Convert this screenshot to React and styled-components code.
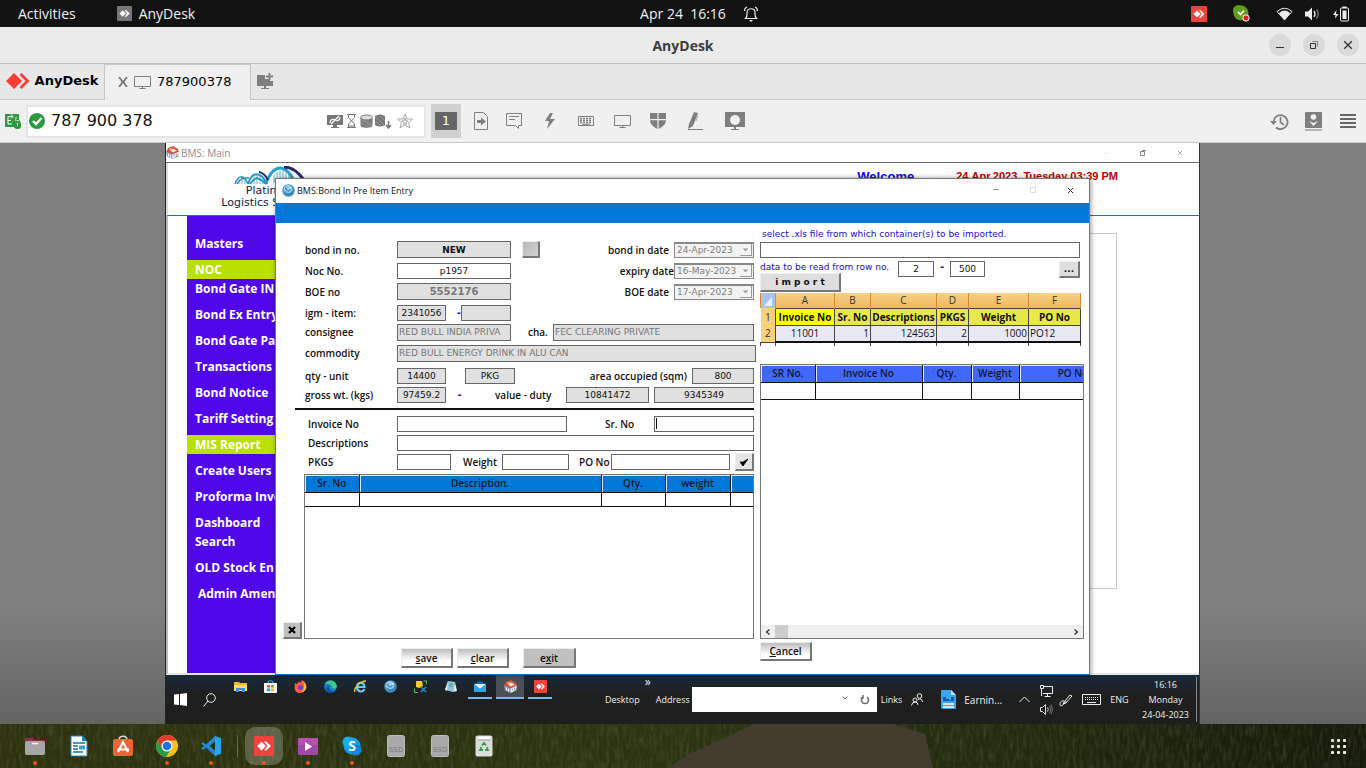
import React from 'react';
import styled, { createGlobalStyle, css } from 'styled-components';

const GlobalStyle = createGlobalStyle`
  *, *::before, *::after { box-sizing: border-box; }
  body { margin: 0; background: #808080; font-family: "Open Sans", "Noto Sans", sans-serif; }
  button, input, select { font: inherit; color: inherit; margin: 0; }
  svg { display: block; flex: none; }
`;

const ui = '"Open Sans", "Noto Sans", sans-serif';
const wide = '"DejaVu Sans", sans-serif';

const Page = styled.div`
  min-height: 100vh;
  display: flex;
  flex-direction: column;
`;

const PlainButton = styled.button`
  display: flex;
  align-items: center;
  justify-content: center;
  padding: 0;
  border: 0;
  background: none;
`;

/* ---------- desktop top bar ---------- */

const TopBar = styled.header`
  height: 27px;
  display: grid;
  grid-template-columns: 1fr auto 1fr;
  align-items: center;
  background: #131313;
  color: #f0f0f0;
  font-size: 14px;
`;

const TopLeft = styled.div`
  display: flex;
  align-items: center;
  gap: 41px;
  padding-left: 18px;
`;

const TopRight = styled.div`
  display: flex;
  align-items: center;
  justify-content: space-between;
  padding: 0 16px 0 17px;
`;

const Tray = styled.div`
  display: flex;
  align-items: center;
  gap: ${(p) => p.$gap}px;
`;

const TopItem = styled(PlainButton)`
  gap: 7px;
`;

/* ---------- application frame ---------- */

const TitleBar = styled.div`
  height: 37px;
  display: grid;
  grid-template-columns: 1fr auto 1fr;
  align-items: center;
  background: #ebebeb;
  border-bottom: 1px solid #bdbdbd;
  color: #3d3d3d;
`;

const WindowTitle = styled.h1`
  margin: 0;
  grid-column: 2;
  font-size: 14px;
  font-weight: 700;
`;

const FrameButtons = styled.div`
  display: flex;
  justify-content: flex-end;
  gap: 12px;
  padding-right: 7px;
`;

const RoundButton = styled(PlainButton)`
  width: 22px;
  height: 22px;
  border-radius: 50%;
  background: #dadada;
`;

const TabBar = styled.nav`
  height: 36px;
  display: flex;
  background: #e7e7e7;
  font-family: ${wide};
  font-size: 13px;
  line-height: 14px;
  color: #000;
`;

const BrandTab = styled(PlainButton)`
  width: 104px;
  gap: 5px;
  padding-bottom: 2px;
  font-weight: 700;
  border-bottom: 1px solid #c6c6c6;
`;

const ActiveTab = styled.div`
  width: 147px;
  display: flex;
  align-items: center;
  padding: 0 0 2px 13px;
  gap: 6px;
  background: #f0f0f0;
  border: solid #c6c6c6;
  border-width: 1px 1px 0 1px;
`;

const TabRest = styled.div`
  flex: 1;
  display: flex;
  align-items: center;
  padding: 0 0 2px 6px;
  border-bottom: 1px solid #c6c6c6;
`;

const ToolBar = styled.div`
  height: 43px;
  display: flex;
  align-items: center;
  background: #f0f0f0;
  border-bottom: 1px solid #c9c9c9;
  color: #7f7f7f;
  padding-left: 5px;
`;

const AddressBox = styled.div`
  width: 400px;
  height: 33px;
  margin-left: 5px;
  display: flex;
  align-items: center;
  gap: 2px;
  padding: 0 10px 0 1px;
  background: #fff;
  border: 2px solid #e5e5e5;
`;

const AddressInput = styled.input`
  flex: 1;
  min-width: 0;
  border: 0;
  padding: 0 0 2px 4px;
  background: none;
  outline: 0;
  color: #111;
  font-family: ${wide};
  font-size: 16px;
`;

const MonitorNumber = styled(PlainButton)`
  width: 30px;
  height: 34px;
  margin: 0 5px;
  background: #d0d0d0;

  span {
    width: 22px;
    height: 18px;
    line-height: 18px;
    background: #666;
    color: #fff;
    font-family: ${wide};
    font-size: 13px;
  }
`;

const ToolButton = styled(PlainButton)`
  width: ${(p) => p.$w || 36}px;
  height: 34px;
`;

const ToolEnd = styled.div`
  display: flex;
  margin-left: auto;
`;

/* ---------- remote screen ---------- */

const Stage = styled.main`
  flex: 1;
  display: flex;
  justify-content: center;
  background: linear-gradient(#808080 80%, #636363);
`;

const Remote = styled.div`
  width: 100%;
  max-width: 1034px;
  display: flex;
  flex-direction: column;
  background: #fff;
  border-right: 1px solid #333;
  box-shadow: -1px 0 0 #222;
`;

const Desktop = styled.div`
  position: relative;
  flex: 1;
  display: flex;
  flex-direction: column;
`;

const MainCaption = styled.div`
  height: 20px;
  display: flex;
  align-items: center;
  gap: 2px;
  padding: 0 16px 0 0;
  border-bottom: 1px solid #6b6b6b;
  color: #8c8c8c;
  font-size: 10px;
`;

const CaptionButtons = styled.div`
  display: flex;
  gap: ${(p) => p.$gap}px;
  margin-left: auto;
`;

const MainHeader = styled.div`
  height: 53px;
  display: flex;
  justify-content: space-between;
  padding: 3px 81px 0 36px;
  border-left: 2px solid #ddd;
  border-bottom: 1px solid #0078d7;
  font-family: "Liberation Sans", sans-serif;
`;

const Company = styled.div`
  width: 132px;
  display: flex;
  flex-direction: column;
  align-items: center;
  font-family: ${wide};
  font-size: 11px;
  line-height: 12px;
  color: #14213d;
  text-align: center;
  white-space: nowrap;
`;

const Greeting = styled.div`
  display: flex;
  gap: 42px;
  height: 20px;
  align-items: center;
  white-space: pre;
  font-weight: 700;
  font-size: 11px;
  color: #c00000;

  strong {
    font-size: 13px;
    color: #0a0aee;
  }
`;

const MainBody = styled.div`
  flex: 1;
  display: flex;
  padding-left: 19px;
  border-left: 2px solid #bbb;
  border-bottom: 2px solid #e4e4e4;
`;

const SideMenu = styled.nav`
  width: 130px;
  padding-top: 18px;
  background: #5008ea;
`;

const MenuLink = styled.a`
  display: block;
  padding-left: ${(p) => (p.$indent ? 11 : 8)}px;
  margin-bottom: ${(p) => (p.$tight ? 0 : 7)}px;
  background: ${(p) => (p.$lit ? '#b9e000' : 'none')};
  color: #fff;
  font-size: 12px;
  font-weight: 700;
  line-height: 19px;
  text-decoration: none;
  white-space: pre;
`;

const EmptyPanel = styled.section`
  flex: 1;
  height: 356px;
  margin: 17px 82px 0 40px;
  border: 1px solid #c8c8c8;
`;

/* ---------- dialog ---------- */

const Dialog = styled.section`
  position: absolute;
  left: 109px;
  right: 109px;
  top: 35px;
  bottom: 0;
  display: flex;
  flex-direction: column;
  background: #fff;
  border: 1px solid #777;
  border-bottom-color: #0078d7;
  box-shadow: 1px 0 5px rgba(0, 0, 0, 0.4);
`;

const DialogCaption = styled.div`
  height: 24px;
  display: flex;
  align-items: center;
  gap: 2px;
  padding: 0 15px 2px 6px;
  font-size: 9px;
  color: #111;
`;

const Band = styled.div`
  height: 20px;
  background: #0078d7;
`;

const DialogBody = styled.div`
  flex: 1;
  display: grid;
  grid-template-columns: 484px minmax(0, 1fr);
  font-size: 10px;
  color: #111;
`;

const FormColumn = styled.form`
  display: flex;
  flex-direction: column;
  padding-right: 6px;
`;

const Fields = styled.div`
  padding: ${(p) => (p.$lower ? '4px 0 2px 32px' : '16px 0 5px 29px')};
`;

const Row = styled.div`
  display: flex;
  align-items: center;
  height: ${(p) => p.$h || 21}px;
  white-space: nowrap;
`;

const Label = styled.label`
  width: ${(p) => (p.$w ? p.$w + 'px' : 'auto')};
  flex: ${(p) => (p.$grow ? 1 : 'none')};
  text-align: ${(p) => (p.$grow ? 'right' : 'left')};
  padding-left: ${(p) => p.$gap || 0}px;
  padding-right: ${(p) => p.$end || 0}px;
  font-weight: 600;
  line-height: 14px;
`;

const Dash = styled.span`
  flex: none;
  width: ${(p) => p.$w}px;
  text-align: ${(p) => (p.$align ? p.$align : 'center')};
  color: #1010e0;
  font-family: ${wide};
  font-weight: 700;
`;

const Field = styled.input`
  flex: ${(p) => (p.$w ? 'none' : 1)};
  width: ${(p) => (p.$w ? p.$w + 'px' : 'auto')};
  min-width: 0;
  height: ${(p) => (p.$tall ? 17 : 16)}px;
  margin-left: ${(p) => p.$gap || 0}px;
  padding: 0 1px;
  border: 1px solid #666;
  border-radius: 0;
  outline: 0;
  background: ${(p) => (p.$shaded ? '#e0e0e0' : '#fff')};
  color: ${(p) => (p.$dim ? '#777' : '#111')};
  font-family: ${wide};
  font-size: ${(p) => (p.$large ? 10 : 9)}px;
  font-weight: ${(p) => (p.$bold ? 700 : 400)};
  text-align: ${(p) => (p.$left ? 'left' : 'center')};
  ${(p) => p.$caret && css`
    background: linear-gradient(#111, #111) 1px 1px / 1px 11px no-repeat #fff;
  `}
`;

const DateBox = styled.span`
  position: relative;
  width: 80px;
  height: 16px;
  border: 1px solid #888;
  border-top-width: 2px;
  background: #f2f2f2;

  svg {
    position: absolute;
    right: 1px;
    top: 0;
    background: #f4f4f4;
    border: solid #999;
    border-width: 0 1px 1px 0;
    pointer-events: none;
  }
`;

const DateSelect = styled.select`
  appearance: none;
  display: block;
  width: 100%;
  height: 13px;
  padding: 0 0 0 2px;
  border: 0;
  background: none;
  opacity: 1;
  color: #808080;
  font-family: ${wide};
  font-size: 9px;
  line-height: 12px;
`;

const bevel = css`
  border: solid;
  border-width: 1px 2px 2px 1px;
  border-color: #eee #777 #777 #eee;
`;

const PushButton = styled.button`
  ${bevel}
  width: ${(p) => p.$w}px;
  height: ${(p) => p.$h || 20}px;
  flex: none;
  padding: 0;
  display: flex;
  align-items: center;
  justify-content: center;
  color: #111;
  background: ${(p) => (p.$flat ? p.$flat : 'linear-gradient(#bdbdbd, #fff 70%)')};
  font-weight: ${(p) => (p.$bold ? 700 : 600)};
  font-family: ${(p) => (p.$bold ? wide : ui)};
  font-size: ${(p) => (p.$bold ? 9 : 10)}px;
  line-height: 12px;
  white-space: pre;
`;

const Rule = styled.hr`
  width: 459px;
  height: 2px;
  margin: 0 0 0 19px;
  border: 0;
  background: #111;
`;

const ListRow = styled.div`
  flex: 1;
  display: flex;
  align-items: flex-end;
  gap: 2px;
  padding-left: ${(p) => (p.$flush ? 0 : 7)}px;
`;

const ListBox = styled.div`
  flex: 1;
  align-self: stretch;
  min-width: 0;
  display: flex;
  flex-direction: column;
  justify-content: space-between;
  overflow: hidden;
  border: 1px solid #777;
`;

const ListTable = styled.table`
  width: ${(p) => p.$w}px;
  table-layout: fixed;
  border-collapse: collapse;

  th {
    height: 17px;
    padding: 0;
    background: ${(p) => p.$head};
    border: solid #111;
    border-width: 0 1px 1px 1px;
    box-shadow: inset 1px 1px 0 #dbe8ff;
    font-weight: 600;
    line-height: 12px;
    color: #101828;
  }
  td {
    height: ${(p) => p.$row}px;
    padding: 0;
    border: 1px solid #111;
  }
  th:first-child, td:first-child { border-left: 0; }
`;

const Actions = styled.div`
  display: flex;
  padding: 9px 0 6px 125px;
  gap: ${(p) => p.$gap}px;
`;

const ImportColumn = styled.div`
  display: flex;
  flex-direction: column;
  padding: 4px 5px 13px 0;
`;

const Hint = styled.label`
  display: block;
  padding-left: ${(p) => p.$indent || 0}px;
  margin-bottom: ${(p) => (p.$indent ? 1 : 0)}px;
  color: #1a0dc4;
  font-family: ${wide};
  font-size: 9px;
  line-height: ${(p) => p.$line}px;
  white-space: nowrap;
`;

const ImportRow = styled.div`
  display: flex;
  align-items: flex-start;
  width: 320px;
  height: 31px;
  margin: 3px 0 1px;
`;

const ImportStack = styled.div`
  width: 138px;
`;

const Spacer = styled.span`
  flex: 1;
`;

const Sheet = styled.table`
  width: 320px;
  height: 53px;
  margin-bottom: 18px;
  table-layout: fixed;
  border-collapse: collapse;
  font-size: 10px;
  line-height: 12px;

  th, td { padding: 0; overflow: hidden; white-space: nowrap; }
  thead th {
    height: 15px;
    background: linear-gradient(#f6cf8a, #f0b95c);
    border: solid #d68a34;
    border-width: 0 1px;
    font-weight: 400;
    color: #333;
  }
  thead th:first-child { background: #a9c4e9; }
  tbody th {
    background: #fbd07c;
    font-weight: 400;
    color: #333;
    text-align: center;
  }
  tbody td { border: 1px solid #444; }
`;

const SheetHead = styled.td`
  height: 17px;
  background: ${(p) => (p.$first ? '#ffff00' : '#e8e84a')};
  font-weight: 700;
  text-align: center;
`;

const SheetCell = styled.td`
  && {
    height: 17px;
    padding: 0 1px;
    background: #e8e8f4;
    border-bottom: 2px solid #111;
  }
  text-align: ${(p) => p.$align};
`;

const SheetStub = styled.td`
  && {
    height: 4px;
    border-bottom: 0;
  }
`;

const ScrollBar = styled.div`
  height: 13px;
  display: flex;
  align-items: center;
  background: #efefef;
  color: #444;
`;

const ScrollThumb = styled.span`
  width: 13px;
  height: 13px;
  margin-right: auto;
  background: #cdcdcd;
`;

const ScrollButton = styled(PlainButton)`
  width: 14px;
  height: 13px;
`;

const CancelBar = styled.div`
  padding-top: 3px;
`;

/* ---------- remote taskbar ---------- */

const TaskBar = styled.footer`
  height: 49px;
  display: flex;
  background: linear-gradient(#1a2a3a, #1f1f1f 45%);
  color: #eee;
  font-size: 9px;
`;

const TaskStart = styled.div`
  width: 59px;
  display: flex;
  align-items: center;
  gap: 16px;
  padding-left: 8px;
`;

const TaskApp = styled(PlainButton)`
  width: ${(p) => (p.$on ? 28 : 24)}px;
  height: 24px;
  margin: 0 ${(p) => (p.$on ? 1 : 3)}px;
  background: ${(p) => (p.$on ? '#4b5058' : 'none')};
  border-bottom: 2px solid ${(p) => (p.$open ? '#76b9ed' : 'transparent')};
`;

const TaskTools = styled.div`
  flex: 1;
  display: flex;
  align-items: center;
  padding-left: 50px;
`;

const Chevrons = styled.span`
  align-self: flex-start;
  width: 16px;
  text-align: center;
  font-size: 12px;
  line-height: 14px;
`;

const TaskField = styled.div`
  width: 185px;
  height: 25px;
  display: flex;
  align-items: center;
  gap: 12px;
  margin: 0 4px 0 2px;
  padding-right: 7px;
  background: #fff;
  color: #777;

  input {
    flex: 1;
    min-width: 0;
    border: 0;
    outline: 0;
    background: none;
  }
`;

const PeopleButton = styled(PlainButton)`
  margin-left: 9px;
`;

const News = styled(PlainButton)`
  gap: 8px;
  margin: 0 17px 0 18px;
  font-size: 10px;
`;

const TrayPair = styled.div`
  width: 24px;
  height: 44px;
  margin: 0 1px 0 4px;
  display: flex;
  flex-direction: column;
  align-items: center;
  justify-content: space-evenly;
`;

const Clock = styled.time`
  width: 62px;
  margin-left: auto;
  border-right: 1px solid #888;
  margin-right: 2px;
  font-size: 9px;
  line-height: 15px;
  text-align: center;
  white-space: nowrap;
`;

/* ---------- dock ---------- */

const Dock = styled.footer`
  position: relative;
  height: 44px;
  display: flex;
  align-items: center;
  padding: 0 17px 0 13px;
  overflow: hidden;
  background: #242b11;
`;

const Wallpaper = styled.svg`
  position: absolute;
  inset: 0;
  width: 100%;
  height: 100%;
`;

const DockApp = styled(PlainButton)`
  position: relative;
  width: 44px;
  height: 44px;

  &::before {
    content: "";
    position: absolute;
    inset: 3px;
    border-radius: 10px;
    background: ${(p) => (p.$active ? 'rgba(255,255,255,0.22)' : 'none')};
  }
  &::after {
    content: "";
    position: absolute;
    bottom: 3px;
    left: 20px;
    width: 4px;
    height: 4px;
    border-radius: 2px;
    background: ${(p) => (p.$running ? '#e95420' : 'none')};
  }
  svg { position: relative; }
`;

const DockDivider = styled.span`
  position: relative;
  width: 1px;
  height: 22px;
  margin: 0 4px;
  background: #66694f;
`;

const GridButton = styled(PlainButton)`
  position: relative;
  width: 22px;
  height: 22px;
  margin-left: auto;
`;

/* ---------- drawings ---------- */

const Svg = ({ w = 16, h = w, box, children, ...rest }) => (
  <svg width={w} height={h} viewBox={box || `0 0 ${w} ${h}`} fill="none" aria-hidden="true" {...rest}>
    {children}
  </svg>
);

const AnyDeskTile = ({ size = 16, bg = '#ef443b' }) => (
  <Svg w={size} box="0 0 16 16">
    <rect width="16" height="16" rx="1" fill={bg} />
    <path d="M2.5 8 6 4.5 9.5 8 6 11.500z" fill="#fff" />
    <path d="M8.500 4.600 9.700 4.600 13.200 8 9.700 11.400 8.500 11.400 11 8z" fill="#fff" stroke="#fff" strokeWidth=".5" />
  </Svg>
);

const Monitor = ({ w = 17 }) => (
  <Svg w={w} h={16} box="0 0 17 16" stroke="#7f7f7f">
    <path d="M.5 2.500h16v10H.5zM8.500 12.500v2M5.500 14.500h6" />
  </Svg>
);

const Database = () => (
  <Svg w={13} h={14} fill="#777">
    <path d="M.5 3.500v8c0 3 12 3 12 0v-8z" />
    <ellipse cx="6.500" cy="3.500" rx="6" ry="2.500" fill="#ddd" stroke="#777" />
    <path d="M1 6l11 6M1 9l8 4M4 6l8 4" stroke="#aaa" strokeWidth=".6" />
  </Svg>
);

const BmsIcon = ({ size = 13 }) => (
  <Svg w={size} box="0 0 13 13">
    <path d="M0 6 2 2l5-2 5 3 1 3-6 3z" fill="#d9503a" />
    <path d="M0 5.500l6.500 3V13L1 10.500z" fill="#7e9be0" />
    <path d="M13 5.500 6.500 8.500V13l5.500-2.500z" fill="#e8ecfa" />
    <path d="M7 13l5.500-2.500V8.500z" fill="#58b947" />
    <path d="M2.500 7.500v3M4.500 8.500v3M8.500 8.500v3M10.500 7.500v2" stroke="#fff" />
    <path d="M10.500 7.500v2M8.500 8.500v2" stroke="#7f6fb5" strokeWidth=".7" />
    <circle cx="4.500" cy="3" r="1.300" fill="#f5a25a" />
    <path d="M7 2.500l4 2-4 2-3-2z" fill="#f6e8e4" />
  </Svg>
);

const GlobeIcon = ({ size = 13 }) => (
  <Svg w={size} box="0 0 13 13">
    <circle cx="6.500" cy="6.500" r="6.200" fill="#3b8ec6" />
    <circle cx="6" cy="5.500" r="4.500" fill="#8fd0f2" />
    <path d="M4 3.500c-1 2 1 3.500 2.500 3.500S9 5 8 3.500M3 7.500c1.500 3 5.500 3 7 0" stroke="#1b6299" />
    <circle cx="8.500" cy="4" r="1" fill="#fff" />
  </Svg>
);

const Logo = () => (
  <Svg w={72} h={19}>
    <g stroke="#6fc3dc" strokeWidth="1.200">
      <path d="M5 13v5M8 11v7M11 13v5M20 11v7M23 9v9M26 9v9M29 11v7M40 9v8M43 6v11M46 4v9M49 3v9M52 3v9M55 5v9M58 8v9" />
    </g>
    <path d="M1 18c3-9 9-10 13 0M3 18c4-7 8-6 12-6" stroke="#2a8fb5" strokeWidth="1.500" />
    <path d="M14 18c4-13 13-13 19 0M16 18c6-9 9-6 16 0" stroke="#2596c4" strokeWidth="2" />
    <path d="M32 17C40-3 52-3 61 17" stroke="#2aa0cc" strokeWidth="3" />
    <path d="M50 1c9 0 15 6 20 13" stroke="#2b2a6c" strokeWidth="3" />
    <path d="M25 6c5 1 7 4 9 8" stroke="#2b2a6c" strokeWidth="2" />
  </Svg>
);

const CloseMark = ({ color = '#222', size = 7 }) => (
  <Svg w={size} box="0 0 8 8" stroke={color} strokeWidth="1.100"><path d="M1 1l6 6M7 1 1 7" /></Svg>
);

const DateField = ({ id, value }) => (
  <DateBox>
    <DateSelect id={id} disabled defaultValue={value}><option>{value}</option></DateSelect>
    <Svg w={12} h={12}><path d="M3 5h6L6 8z" fill="#999" /></Svg>
  </DateBox>
);

const Ssd = () => (
  <Svg w={18} h={22}>
    <rect x=".5" y=".5" width="17" height="21" rx="2" fill="#a9a9a9" stroke="#bdbdbd" />
    <text x="9" y="17" fontSize="7" fill="#7c7c7c" textAnchor="middle" fontFamily="DejaVu Sans, sans-serif">SSD</text>
  </Svg>
);

const taskApps = [
  ['File Explorer', <Svg w={13}><path d="M0 2h5l1 1h7v8H0z" fill="#f2b632" /><path d="M0 5h13v6H0z" fill="#fbd969" /><path d="M2 8h9v4H8v-2H5v2H2z" fill="#3a8fd8" /></Svg>],
  ['Store', <Svg w={13}><path d="M4 3c0-3 5-3 5 0" stroke="#29a5e0" strokeWidth="1.200" /><path d="M0 3h13v9q0 1-1 1H1q-1 0-1-1z" fill="#f4f4f4" /><path d="M3 5h3v2.500H3z" fill="#f25022" /><path d="M7 5h3v2.500H7z" fill="#7fba00" /><path d="M3 8.500h3V11H3z" fill="#00a4ef" /><path d="M7 8.500h3V11H7z" fill="#ffb900" /></Svg>],
  ['Firefox', <Svg w={13}><path d="M1 3l2 1 2-3 1 2 2-3c4 3 5 5 4 8-1 3-3 5-6 5S.5 11 .5 7z" fill="#ff5a36" /><path d="M9 1c3 3 4 6 3 8s-3 3-6 3c4-1 5-5 3-11z" fill="#ffb52e" /><circle cx="6.500" cy="7.500" r="2.600" fill="#7a3fd0" /></Svg>],
  ['Edge', <Svg w={13}><circle cx="6.500" cy="6.500" r="6.300" fill="#1481c8" /><path d="M1 4C3-1 11-1 12.800 6c0 3-3 3-5 2 1-3-3-5-6.800-4z" fill="#3ccb8a" /><path d="M5 6c-1 3 2 6 6 5-3 3-8 2-9-2 0-2 1-3 3-3z" fill="#0d4fa3" /></Svg>],
  ['Internet Explorer', <Svg w={13}><path d="M10.500 9c-2 4-7.500 3-7.500-2s7-6 7.500 0H4" stroke="#5fcbf7" strokeWidth="2.200" /><path d="M1 12C-1 9 6 1 12 1" stroke="#f7c834" strokeWidth="1.300" /></Svg>],
  ['Bond', <GlobeIcon />],
  ['Tools', <Svg w={13}><path d="M2 1h6l1 5-4 2-3-1z" fill="#f7c93a" /><path d="M7 7l5 5M12 7l-5 5" stroke="#2b8ad6" strokeWidth="1.500" /><path d="M9.500 1h3v3M.5 8.500v4h3.500" stroke="#5bb850" strokeWidth="1.200" /></Svg>],
  ['Notepad', <Svg w={13}><path d="M4 1l7 1-2 10-8-2z" fill="#8fc7d8" /><path d="M11 2l2 9-4 1z" fill="#e4edf0" /><path d="M4 1L1 10l2 .5z" fill="#e4edf0" /><path d="M5 4l4 .5M5 6l3.500.5" stroke="#4b94aa" /></Svg>],
  ['Mail', <Svg w={14} h={13}><path d="M1 4l6-3 6 3v8H1z" fill="#0f6cbd" /><path d="M1 4h12L7 9z" fill="#d8ecfb" /><path d="M1 4.500 7 9l6-4.500V12H1z" fill="#2aa4ee" /></Svg>, true],
  ['BMS', <BmsIcon />, true, true],
  ['AnyDesk', <AnyDeskTile size={13} />, true],
];

const dockApps = [
  ['Files', true, <Svg w={22}><path d="M1 3h8l2 2h10v5H1z" fill="#8c2f4e" /><rect x="1" y="6" width="20" height="14" rx="2" fill="#a6a6a6" /><path d="M8 8.500h6" stroke="#fff" strokeWidth="1.500" /></Svg>],
  ['Writer', false, <Svg w={18} h={22}><path d="M1 1h11l5 5v15H1z" fill="#fff" stroke="#1c86c8" /><path d="M12 1l5 5h-5z" fill="#1c86c8" /><path d="M3 8h12M3 11h5M3 14h5M3 17h10" stroke="#1671ab" strokeWidth="1.500" /><path d="M9 10.500h6v4H9z" fill="#3a9edb" /></Svg>],
  ['Software', false, <Svg w={22}><path d="M7 5c0-5 8-5 8 0" stroke="#ddd" strokeWidth="1.500" /><rect x="1" y="4" width="20" height="17" rx="2" fill="#ee6434" /><path d="M6 17l5-10 5 10M5 14.500h12" stroke="#fff" strokeWidth="2" /></Svg>],
  ['Chrome', true, <Svg w={22}><circle cx="11" cy="11" r="11" fill="#fbc116" /><path d="M1.500 5.500A11 11 0 0 1 20.500 5.500H11L6 14z" fill="#e33b2e" /><path d="M1.500 5.500A11 11 0 0 0 10 22l5.500-8.500H6.500z" fill="#269b4a" /><circle cx="11" cy="11" r="5.500" fill="#fff" /><circle cx="11" cy="11" r="4.300" fill="#1a73e8" /></Svg>],
  ['Code', true, <Svg w={20}><path d="M14 0l6 2.500v15L14 20 5 11.500 2 14l-2-1.500L3 10 0 7.500 2 6l3 2.500z" fill="#1f8ad2" /><path d="M14 5.500v9L8.500 10z" fill="#272e14" /><path d="M14 0l6 2.500v15L14 20z" fill="#2ba3ee" /></Svg>],
  null,
  ['AnyDesk', true, <AnyDeskTile size={20} />],
  ['Videos', true, <Svg w={22}><rect x="1" y="3" width="20" height="17" rx="1" fill="#b54fb0" /><path d="M1 10h20v8q0 2-2 2H3q-2 0-2-2z" fill="#8d3f9c" opacity=".5" /><path d="M8 7l7 4.500L8 16z" fill="#fff" /></Svg>],
  ['Skype', true, <Svg w={20}><circle cx="10" cy="10" r="8.500" fill="#0c9fe8" /><circle cx="6" cy="6" r="5.500" fill="#12aef0" /><circle cx="14" cy="14" r="5.500" fill="#0a86dc" /><text x="10" y="15" textAnchor="middle" fontSize="14" fontWeight="700" fontFamily="Open Sans, sans-serif" fill="#fff">S</text></Svg>],
  ['Drive 1', false, <Ssd />],
  ['Drive 2', false, <Ssd />],
  ['Trash', false, <Svg w={18} h={22}><rect x=".5" y=".5" width="17" height="21" rx="2" fill="#dcdcdc" /><path d="M3 3h12" stroke="#fff" strokeWidth="3" /><path d="M3 5h12" stroke="#999" /><path d="M7 10.500 9 8l2 2.500M12 12l1 3h-3M8 15H5l1.500-3" stroke="#3a9b45" strokeWidth="1.800" /></Svg>],
];

const menu = [
  ['Masters'],
  ['NOC', { $lit: true, $tight: true }],
  ['Bond Gate IN'],
  ['Bond Ex Entry'],
  ['Bond Gate Pa'],
  ['Transactions'],
  ['Bond Notice'],
  ['Tariff Setting'],
  ['MIS Report', { $lit: true }],
  ['Create Users'],
  ['Proforma Invoice'],
  ['Dashboard\nSearch'],
  ['OLD Stock En'],
  ['Admin Amen', { $indent: true }],
];

const gridDots = [5, 11, 17];

export default function App() {
  return (
    <Page>
      <GlobalStyle />
      <TopBar>
        <TopLeft>
          <TopItem>Activities</TopItem>
          <TopItem><AnyDeskTile size={15} bg="#777" />AnyDesk</TopItem>
        </TopLeft>
        <TopItem>Apr 24&nbsp; 16:16</TopItem>
        <TopRight>
          <Svg w={16} stroke="#eee" strokeWidth="1.200">
            <path d="M2.500 12.500c2-2 1.500-4 1.500-6 0-5 8-5 8 0 0 2-.5 4 1.500 6zM1.500 5q0-3 2.500-4M14.500 5q0-3-2.500-4" />
            <path d="M6 14h4l-2 2z" fill="#eee" stroke="none" />
          </Svg>
          <Tray $gap={26}>
            <AnyDeskTile size={16} />
            <Svg w={17}>
              <circle cx="5.500" cy="5.500" r="5.500" fill="#5f9e1c" /><circle cx="8" cy="8" r="7.500" fill="#5f9e1c" />
              <path d="M5 7l2.500 2.500L11 5.500" stroke="#fff" strokeWidth="1.600" />
              <circle cx="13" cy="13" r="3.200" fill="#e02020" stroke="#fff" />
            </Svg>
            <Tray $gap={12}>
              <Svg w={17} h={14} stroke="#eee"><path d="M1 4.500Q8.500-2 16 4.500L8.500 13z" /><path d="M3.500 6Q8.500 2 13.500 6L8.500 12.500z" fill="#eee" /></Svg>
              <Svg w={16} h={14}><path d="M0 4.500h3L7 .5v13L3 9.500H0z" fill="#eee" /><path d="M9 4q2 3 0 6" stroke="#eee" strokeWidth="1.300" /><path d="M11.500 2.500q3.500 4.500 0 9" stroke="#777" strokeWidth="1.300" /></Svg>
              <Svg w={17} h={16}><path d="M3.500 4 0 9h2.500L2 12.500 5.500 8H3z" fill="#eee" /><rect x="7.500" y="2" width="8" height="13" rx="1" stroke="#eee" /><path d="M9.500 4.500h4v8.500h-4zM9.500.5h4V2h-4z" fill="#eee" /></Svg>
            </Tray>
          </Tray>
        </TopRight>
      </TopBar>

      <TitleBar>
        <WindowTitle>AnyDesk</WindowTitle>
        <FrameButtons>
          <RoundButton aria-label="Minimize"><Svg w={8} stroke="#333"><path d="M0 6.500h8" /></Svg></RoundButton>
          <RoundButton aria-label="Restore"><Svg w={8} stroke="#333"><path d="M.5 2.500h5v5h-5z" /><path d="M2.500.5h5v5" stroke="#888" /></Svg></RoundButton>
          <RoundButton aria-label="Close"><CloseMark size={10} color="#333" /></RoundButton>
        </FrameButtons>
      </TitleBar>

      <TabBar>
        <BrandTab>
          <Svg w={24} h={18}>
            <path d="M0 9l8-8 8 8-8 8z" fill="#fb3c33" />
            <path d="M14.500 2 21.500 9l-7 7" stroke="#fb3c33" strokeWidth="2.800" />
          </Svg>
          AnyDesk
        </BrandTab>
        <ActiveTab>
          <PlainButton aria-label="Close tab"><Svg w={10} stroke="#7f7f7f" strokeWidth="2"><path d="M1 0 4 4v2L1 10M9 0 6 4v2l3 4M4 5h2" /></Svg></PlainButton>
          <Monitor />
          787900378
        </ActiveTab>
        <TabRest>
          <PlainButton aria-label="New tab">
            <Svg w={17} h={16}><path d="M0 2h8v4h5v2h3v5H0zM7 13h2v2h3v1H4v-1h3z" fill="#7f7f7f" /><path d="M12.500 0v7M9 3.500h7" stroke="#7f7f7f" strokeWidth="1.800" /></Svg>
          </PlainButton>
        </TabRest>
      </TabBar>

      <ToolBar>
        <PlainButton aria-label="Encrypted connection">
          <Svg w={16} h={15}><path d="M0 0h14v6h-4v7H0z" fill="#2b9a3e" /><path d="M8 2.500H3v4h3M6 .5l2 2-2 2M3 6v4h4M11 3v3" stroke="#fff" /><rect x="9" y="7" width="7" height="8" rx="3" fill="#2b9a3e" /><path d="M11 8V6q1.500-2 3 0v2" stroke="#2b9a3e" /><path d="M12.500 9v3" stroke="#fff" /></Svg>
        </PlainButton>
        <AddressBox>
          <Svg w={16}><circle cx="8" cy="8" r="8" fill="#2b9a3e" /><path d="M4 8l3 3 5.500-6" stroke="#fff" strokeWidth="2.400" /></Svg>
          <AddressInput aria-label="Remote address" defaultValue="787 900 378" />
          <Svg w={16} h={14}><path d="M0 1h16v10H0zM6 11h4v2h2v1H4v-1h2z" fill="#777" /><path d="M3 9c0-4 3-4 5-3M13 3c0 4-3 4-5 3M4 10l8-8" stroke="#fff" strokeWidth="1.200" /></Svg>
          <Svg w={13} h={14} stroke="#777"><path d="M2 .5h9M2 13.500h9M3.500 1v2.500L9.500 10v3M9.500 1v2.500L3.500 10v3M4 12h5" /></Svg>
          <Database />
          <Svg w={17} h={15} fill="#777"><path d="M0 2q5-3 10 0v9q-5 3-10 0z" /><path d="M13.500 7v7M11 11l2.500 3 2.500-3" stroke="#777" strokeWidth="1.500" fill="none" /><path d="M1 3l8 8M1 7l5 5M5 2l5 5" stroke="#bbb" strokeWidth=".6" /></Svg>
          <Svg w={20} h={16} stroke="#aaa"><path d="M11 1l2 5h5.500l-4 3.500 1.500 5.500-5-3.200L6 15l1.500-5.500L3.500 6H9z" /><path d="M11 5l1 3h2l-2 1.500.5 2-1.500-1-1.500 1 .5-2L8 8h2z" /></Svg>
        </AddressBox>
        <MonitorNumber aria-label="Monitor 1"><span>1</span></MonitorNumber>
        <ToolButton $w={30} aria-label="Transfer"><Svg w={14} h={18} stroke="#7f7f7f"><path d="M.5.500h9l4 4v13H.5z" /><path d="M3 8h4V5.500l5 4-5 4V11H3z" fill="#7f7f7f" stroke="none" /></Svg></ToolButton>
        <ToolButton aria-label="Chat"><Svg w={16} stroke="#7f7f7f"><path d="M.5.500h15v12h-3v3l-3-3h-9zM3 3.500h10M3 6.500h6" /></Svg></ToolButton>
        <ToolButton aria-label="Actions"><Svg w={12} h={16}><path d="M6 0 1 8h4L3 16l8-10H6l3-6z" fill="#7f7f7f" /></Svg></ToolButton>
        <ToolButton aria-label="Keyboard"><Svg w={16} h={10} stroke="#7f7f7f"><path d="M.5.500h15v9H.5z" /><path d="M2 2.500h12M2 4.500h12M2 6.500h12" strokeDasharray="2 1" strokeWidth="1.300" /><path d="M4 8.300h8" /></Svg></ToolButton>
        <ToolButton aria-label="Display"><Monitor /></ToolButton>
        <ToolButton aria-label="Permissions"><Svg w={16}><path d="M0 0h7.400v6H0zM8.600 0H16v6H8.600zM0 7.200h7.400V16Q0 12 0 7.200zM8.600 7.200H16Q16 12 8.600 16z" fill="#7f7f7f" /></Svg></ToolButton>
        <ToolButton $w={40} aria-label="Whiteboard"><Svg w={16} h={18}><path d="M0 17.500h15" stroke="#7f7f7f" /><path d="M6 0l4 1-5 13-5 3 1-5z" fill="#7f7f7f" /><path d="M10 3l-2 6" stroke="#aaa" /></Svg></ToolButton>
        <ToolButton $w={38} aria-label="Record"><Svg w={20} h={18}><path d="M0 0h20v15H0zM9 15h2v2h3v1H6v-1h3z" fill="#7f7f7f" /><circle cx="10" cy="8" r="5" fill="#f0f0f0" /></Svg></ToolButton>
        <ToolEnd>
          <ToolButton $w={34} aria-label="History"><Svg w={19} h={17} stroke="#7f7f7f" strokeWidth="1.800"><path d="M3.500 9A7 7 0 1 1 6 14.500M10.500 4v5l3.500 3" /><path d="M0 8h7l-3.500 4z" fill="#7f7f7f" stroke="none" /></Svg></ToolButton>
          <ToolButton $w={34} aria-label="Account"><Svg w={17} h={19}><rect width="17" height="16" rx="1" fill="#7f7f7f" /><path d="M0 18h17" stroke="#7f7f7f" /><circle cx="8.500" cy="5" r="2.800" fill="#f0f0f0" /><path d="M4 9l4.500 2L13 9 8.500 14z" fill="#f0f0f0" /></Svg></ToolButton>
          <ToolButton $w={36} aria-label="Menu"><Svg w={16} stroke="#666" strokeWidth="2"><path d="M0 2h16M0 6h16M0 10h16M0 14h16" /></Svg></ToolButton>
        </ToolEnd>
      </ToolBar>

      <Stage>
        <Remote>
          <Desktop>
            <MainCaption>
              <BmsIcon />
              BMS: Main
              <CaptionButtons $gap={31}>
                <Svg w={6} stroke="#eee"><path d="M0 3.500h6" /></Svg>
                <Svg w={6} stroke="#888"><path d="M.5 1.500h4v4h-4zM2 .5h4" /></Svg>
                <CloseMark size={6} color="#999" />
              </CaptionButtons>
            </MainCaption>
            <MainHeader>
              <Company><Logo />Platinum<br />Logistics Services</Company>
              <Greeting><strong>Welcome</strong><span>24.Apr.2023  Tuesday 03:39 PM</span></Greeting>
            </MainHeader>
            <MainBody>
              <SideMenu>
                {menu.map(([text, props]) => <MenuLink key={text} href="#" {...props}>{text}</MenuLink>)}
              </SideMenu>
              <EmptyPanel />
            </MainBody>

            <Dialog role="dialog" aria-label="BMS:Bond In Pre Item Entry">
              <DialogCaption>
                <GlobeIcon />
                BMS:Bond In Pre Item Entry
                <CaptionButtons $gap={31}>
                  <Svg w={6} stroke="#999"><path d="M0 2.500h6" /></Svg>
                  <Svg w={6} stroke="#ddd"><path d="M.5.500h5v5h-5z" /></Svg>
                  <CloseMark size={7} />
                </CaptionButtons>
              </DialogCaption>
              <Band />
              <DialogBody>
                <FormColumn onSubmit={(e) => e.preventDefault()}>
                  <Fields>
                    <Row>
                      <Label htmlFor="bondNo" $w={92}>bond in no.</Label>
                      <Field id="bondNo" $w={114} $tall $shaded $bold readOnly defaultValue="NEW" />
                      <Dash $w={11} />
                      <PushButton type="button" aria-label="Look up" $w={18} $h={17} $flat="linear-gradient(135deg, #b5b5b5, #d4d4d4)" />
                      <Label htmlFor="bondDate" $grow $end={5}>bond in date</Label>
                      <DateField id="bondDate" value="24-Apr-2023" />
                    </Row>
                    <Row>
                      <Label htmlFor="nocNo" $w={92}>Noc No.</Label>
                      <Field id="nocNo" $w={114} defaultValue="p1957" />
                      <Label htmlFor="expDate" $grow>expiry date</Label>
                      <DateField id="expDate" value="16-May-2023" />
                    </Row>
                    <Row>
                      <Label htmlFor="boeNo" $w={92}>BOE no</Label>
                      <Field id="boeNo" $w={114} $tall $shaded $dim $bold $large readOnly defaultValue="5552176" />
                      <Label htmlFor="boeDate" $grow $end={5}>BOE date</Label>
                      <DateField id="boeDate" value="17-Apr-2023" />
                    </Row>
                    <Row>
                      <Label htmlFor="igm" $w={92}>igm - item:</Label>
                      <Field id="igm" $w={49} $shaded readOnly defaultValue="2341056" />
                      <Dash $w={15} $align="right">-</Dash>
                      <Field aria-label="item" $w={50} $shaded readOnly />
                    </Row>
                    <Row $h={18}>
                      <Label htmlFor="consignee" $w={92}>consignee</Label>
                      <Field id="consignee" $w={114} $tall $shaded $dim $left readOnly defaultValue="RED BULL INDIA PRIVA" />
                      <Label htmlFor="cha" $w={42} $gap={17}>cha.</Label>
                      <Field id="cha" $tall $shaded $dim $left readOnly defaultValue="FEC CLEARING PRIVATE" />
                    </Row>
                    <Row $h={24}>
                      <Label htmlFor="commodity" $w={92}>commodity</Label>
                      <Field id="commodity" $w={359} $tall $shaded $dim $left readOnly defaultValue="RED BULL ENERGY DRINK IN ALU CAN" />
                    </Row>
                    <Row>
                      <Label htmlFor="qty" $w={92}>qty - unit</Label>
                      <Field id="qty" $w={49} $shaded readOnly defaultValue="14400" />
                      <Field aria-label="unit" $w={50} $gap={19} $shaded readOnly defaultValue="PKG" />
                      <Label htmlFor="area" $grow $end={5}>area occupied (sqm)</Label>
                      <Field id="area" $w={62} $shaded readOnly defaultValue="800" />
                    </Row>
                    <Row $h={17}>
                      <Label htmlFor="gross" $w={92}>gross wt. (kgs)</Label>
                      <Field id="gross" $w={49} $shaded readOnly defaultValue="97459.2" />
                      <Dash $w={27}>-</Dash>
                      <Label htmlFor="value" $w={93} $gap={22}>value - duty</Label>
                      <Field id="value" $w={83} $shaded readOnly defaultValue="10841472" />
                      <Field aria-label="duty" $gap={5} $shaded readOnly defaultValue="9345349" />
                    </Row>
                  </Fields>
                  <Rule />
                  <Fields $lower>
                    <Row $h={19}>
                      <Label htmlFor="invoice" $w={89}>Invoice No</Label>
                      <Field id="invoice" $w={170} $left />
                      <Label htmlFor="srNo" $w={87} $gap={38}>Sr. No</Label>
                      <Field id="srNo" $left $caret />
                    </Row>
                    <Row $h={19}>
                      <Label htmlFor="desc" $w={89}>Descriptions</Label>
                      <Field id="desc" $left />
                    </Row>
                    <Row $h={20}>
                      <Label htmlFor="pkgs" $w={89}>PKGS</Label>
                      <Field id="pkgs" $w={54} $left />
                      <Label htmlFor="weight" $w={51} $gap={12}>Weight</Label>
                      <Field id="weight" $w={67} $left />
                      <Label htmlFor="poNo" $w={42} $gap={10}>PO No</Label>
                      <Field id="poNo" $left />
                      <Dash $w={5} />
                      <PushButton type="button" aria-label="Add item" $w={19} $h={18} $flat="#e4e4e4">
                        <Svg w={8}><path d="M0 4l3 4 5-7-5 3z" fill="#000" stroke="#000" strokeWidth=".8" /></Svg>
                      </PushButton>
                    </Row>
                  </Fields>
                  <ListRow>
                    <PushButton type="button" aria-label="Delete item" $w={19} $h={17} $flat="#c0c0c0">
                      <Svg w={8} stroke="#000" strokeWidth="2.200"><path d="M1 1l6 6M7 1 1 7" /></Svg>
                    </PushButton>
                    <ListBox>
                      <ListTable $w={510} $head="#0078d7" $row={14}>
                        <colgroup><col width="54" /><col width="242" /><col width="64" /><col width="65" /><col width="85" /></colgroup>
                        <thead><tr><th>Sr. No</th><th>Description.</th><th>Qty.</th><th>weight</th><th /></tr></thead>
                        <tbody><tr><td /><td /><td /><td /><td /></tr></tbody>
                      </ListTable>
                    </ListBox>
                  </ListRow>
                  <Actions $gap={4}>
                    <PushButton $w={52}><u>s</u>ave</PushButton>
                    <PushButton type="button" $w={52}><u>c</u>lear</PushButton>
                    <Dash $w={6} />
                    <PushButton type="button" $w={53} $flat="#c0c0c0">e<u>x</u>it</PushButton>
                  </Actions>
                </FormColumn>

                <ImportColumn>
                  <Hint htmlFor="xls" $indent={2} $line={14}>select .xls file from which container(s) to be imported.</Hint>
                  <Row $h={16}><Field id="xls" $w={320} $left /></Row>
                  <ImportRow>
                    <ImportStack>
                      <Hint htmlFor="rowFrom" $line={12}>data to be read from row no.</Hint>
                      <PushButton type="button" $w={81} $h={19} $flat="#dedede" $bold>i m p o r t</PushButton>
                    </ImportStack>
                    <Field id="rowFrom" $w={36} defaultValue="2" />
                    <Dash $w={16}>-</Dash>
                    <Field aria-label="last row" $w={35} defaultValue="500" />
                    <Spacer />
                    <PushButton type="button" $w={21} $h={17} $flat="#dedede" $bold>...</PushButton>
                  </ImportRow>
                  <Sheet>
                    <colgroup><col width="15" /><col width="59" /><col width="36" /><col width="66" /><col width="32" /><col width="60" /><col width="52" /></colgroup>
                    <thead>
                      <tr>
                        <th><Svg w={14} h={14}><path d="M11 3v9H3z" fill="#e8f1fd" /></Svg></th>
                        {['A', 'B', 'C', 'D', 'E', 'F'].map((c) => <th key={c}>{c}</th>)}
                      </tr>
                    </thead>
                    <tbody>
                      <tr>
                        <th>1</th>
                        {['Invoice No', 'Sr. No', 'Descriptions', 'PKGS', 'Weight', 'PO No'].map((c, i) => (
                          <SheetHead key={c} $first={i === 0}>{c}</SheetHead>
                        ))}
                      </tr>
                      <tr>
                        <th>2</th>
                        <SheetCell $align="center">11001</SheetCell>
                        <SheetCell $align="right">1</SheetCell>
                        <SheetCell $align="right">124563</SheetCell>
                        <SheetCell $align="right">2</SheetCell>
                        <SheetCell $align="right">1000</SheetCell>
                        <SheetCell $align="left">PO12</SheetCell>
                      </tr>
                      <tr><SheetStub />{[1, 2, 3, 4, 5, 6].map((n) => <SheetStub key={n} />)}</tr>
                    </tbody>
                  </Sheet>
                  <ListRow $flush>
                    <ListBox>
                      <ListTable $w={366} $head="#4068ff" $row={17}>
                        <colgroup><col width="54" /><col width="107" /><col width="49" /><col width="48" /><col width="108" /></colgroup>
                        <thead><tr><th>SR No.</th><th>Invoice No</th><th>Qty.</th><th>Weight</th><th>PO No</th></tr></thead>
                        <tbody><tr><td /><td /><td /><td /><td /></tr></tbody>
                      </ListTable>
                      <ScrollBar>
                        <ScrollButton aria-label="Scroll left"><Svg w={6} stroke="#333" strokeWidth="1.300"><path d="M4.500.5 1.500 3l3 2.500" /></Svg></ScrollButton>
                        <ScrollThumb />
                        <ScrollButton aria-label="Scroll right"><Svg w={6} stroke="#333" strokeWidth="1.300"><path d="M1.500.5 4.500 3l-3 2.500" /></Svg></ScrollButton>
                      </ScrollBar>
                    </ListBox>
                  </ListRow>
                  <CancelBar><PushButton type="button" $w={52} $h={19}><u>C</u>ancel</PushButton></CancelBar>
                </ImportColumn>
              </DialogBody>
            </Dialog>
          </Desktop>

          <TaskBar>
            <TaskStart>
              <PlainButton aria-label="Start"><Svg w={13}><path d="M0 1.500 5 1v11L0 11.500zM6 1l7-1v13l-7-1z" fill="#fff" /></Svg></PlainButton>
              <PlainButton aria-label="Search"><Svg w={13} h={14} stroke="#eee"><circle cx="8" cy="5" r="4.300" /><path d="M5 8 .5 13.500" /></Svg></PlainButton>
            </TaskStart>
            {taskApps.map(([name, icon, open, on]) => (
              <TaskApp key={name} aria-label={name} $open={open} $on={on}>{icon}</TaskApp>
            ))}
            <TaskTools>
              Desktop
              <Chevrons>»</Chevrons>
              <label htmlFor="deskAddress">Address</label>
              <TaskField>
                <input id="deskAddress" />
                <Svg w={6} h={12} stroke="#777"><path d="M.5 2.500 3 5l2.500-2.500" /></Svg>
                <Svg w={10} stroke="#666" strokeWidth="1.500"><path d="M3 2.200a3.500 3.500 0 1 0 4 0M3 0v3H.5" /></Svg>
              </TaskField>
              Links
              <PeopleButton aria-label="People">
                <Svg w={12} h={13} stroke="#eee"><circle cx="8.500" cy="3" r="2.300" /><path d="M7 6.500q4-2 4.500 2.500" /><circle cx="4" cy="7" r="2" /><path d="M.5 12.500q.5-3.500 3.500-3.500t3 3" /></Svg>
              </PeopleButton>
              <News>
                <Svg w={15} h={19}><path d="M0 1q0-1 1-1h9l5 5v13q0 1-1 1H1q-1 0-1-1z" fill="#36a6f0" /><path d="M10 0l5 5h-5z" fill="#bfe3fc" /><path d="M2 11V7h3v2h3v1h2V7h3v4z" fill="#0b5cad" /><path d="M2 14h11M2 17h11" stroke="#fff" strokeWidth="1.500" /></Svg>
                Earnin...
              </News>
              <PlainButton aria-label="Show hidden icons"><Svg w={11} h={7} stroke="#eee"><path d="M.5 6 5.500 1l5 5" /></Svg></PlainButton>
              <TrayPair>
                <Svg w={13} h={12} stroke="#eee"><path d="M3 1.500h9.500v7H3M.5.500h3v3h-3zM1.500 4v7M7.500 9v2.500M4.500 11.500h6" /></Svg>
                <Svg w={13} h={11} stroke="#ddd"><path d="M.5 3.500h2l3-3v10l-3-3h-2zM7.500 3.500q1.500 2 0 4" /><path d="M9.500 2q2.500 3.500 0 7M11 .5q3 5 0 10" stroke="#777" /></Svg>
              </TrayPair>
              <Tray $gap={9}>
                <Svg w={14} stroke="#eee"><path d="M5 9l6-7 2 1-6 7-3 1zM5 8c-4-1-5 4-3 5 3 0 2-5 6-4" /></Svg>
                <Svg w={19} h={11} stroke="#eee"><path d="M.5.500h18v10H.5z" /><path d="M3 3.500h13M3 5.500h13" strokeDasharray="1 1" /><path d="M5 8.500h9" /></Svg>
                ENG
              </Tray>
              <Clock>16:16<br />Monday<br />24-04-2023</Clock>
            </TaskTools>
          </TaskBar>
        </Remote>
      </Stage>

      <Dock>
        <Wallpaper viewBox="0 0 1366 44" preserveAspectRatio="none" aria-hidden="true">
          <defs>
            <linearGradient id="meadow">
              <stop offset="0" stopColor="#2e320f" /><stop offset=".5" stopColor="#2b3413" />
              <stop offset=".75" stopColor="#222a10" /><stop offset="1" stopColor="#161a0c" />
            </linearGradient>
            <filter id="blades">
              <feTurbulence type="fractalNoise" baseFrequency="0.3 0.08" numOctaves="3" seed="4" />
              <feColorMatrix values="0 0 0 0 0.32  0 0 0 0 0.35  0 0 0 0 0.16  0.9 0.9 0 0 -0.75" />
            </filter>
          </defs>
          <rect width="1366" height="44" fill="url(#meadow)" />
          <rect width="1366" height="44" filter="url(#blades)" opacity=".3" />
          <path d="M753 0h140l32 10 8 34H668l22-14 26-12z" fill="#433d30" />
        </Wallpaper>
        {dockApps.map((app) => (app
          ? <DockApp key={app[0]} aria-label={app[0]} $running={app[1]} $active={app[0] === 'AnyDesk'}>{app[2]}</DockApp>
          : <DockDivider key="divider" />))}
        <GridButton aria-label="Show applications">
          <Svg w={22}>
            {gridDots.map((y) => gridDots.map((x) => <rect key={`${x}-${y}`} x={x - 1} y={y - 1} width="3" height="3" rx="1" fill="#f2f2f2" />))}
          </Svg>
        </GridButton>
      </Dock>
    </Page>
  );
}
